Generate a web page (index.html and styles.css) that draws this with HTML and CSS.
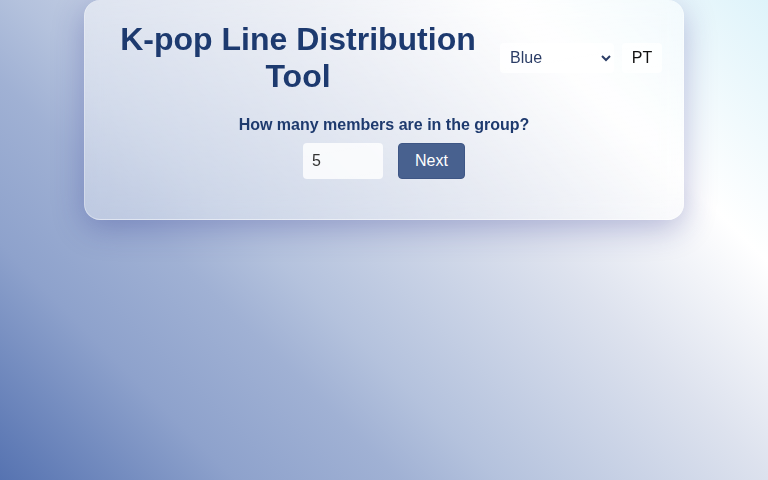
FILE: index.html
```html
<!DOCTYPE html>
<html lang="en">
<head>
<meta charset="utf-8">
<title>K-pop Line Distribution Tool</title>
<link rel="stylesheet" href="styles.css">
</head>
<body>
  <main class="card">
    <header class="header">
      <h1 class="title">K-pop Line Distribution Tool</h1>
      <div class="controls">
        <select class="theme-select">
          <option>Blue</option>
          <option>Pink</option>
          <option>Purple</option>
        </select>
        <button class="lang-btn" type="button">PT</button>
      </div>
    </header>
    <section class="step">
      <label class="question" for="members">How many members are in the group?</label>
      <div class="row">
        <input id="members" class="count-input" type="text" value="5">
        <button class="next-btn" type="button">Next</button>
      </div>
    </section>
  </main>
</body>
</html>
```

FILE: styles.css
```css
html, body {
  height: 100%;
}
body {
  margin: 0;
  font-family: "Liberation Sans", Arial, sans-serif;
  background: linear-gradient(45deg, #5673b1 0%, #8ea2cc 19%, #a0b1d4 32%, #b4c2dd 40%, #dde2ee 62%, #ffffff 79%, #def3fa 100%);
  background-attachment: fixed;
}
.card {
  box-sizing: border-box;
  width: 600px;
  margin: 0 auto;
  padding: 0 21px 40px 21px;
  border-radius: 16px;
  border: 1px solid rgba(255, 255, 255, 0.35);
  border-top: none;
  background: linear-gradient(170deg, rgba(255, 255, 255, 0.5), rgba(255, 255, 255, 0.28));
  backdrop-filter: blur(10px);
  box-shadow: 0 8px 32px rgba(31, 38, 135, 0.3);
}
.header {
  display: flex;
  align-items: center;
  gap: 9px;
  margin-left: -1px;
}
.title {
  flex: 1;
  margin: 21px 0 21px;
  font-size: 32px;
  font-weight: bold;
  line-height: 36.8px;
  text-align: center;
  color: #1d3a6f;
}
.controls {
  display: flex;
  align-items: center;
  gap: 8px;
}
.theme-select {
  width: 114px;
  height: 30px;
  padding: 0 4px 0 6px;
  border: none;
  border-radius: 4px;
  background-color: rgba(255, 255, 255, 0.75);
  font-family: "Liberation Sans", Arial, sans-serif;
  font-size: 16px;
  color: #2b3d66;
}
.lang-btn {
  width: 40px;
  height: 30px;
  padding: 0;
  border: none;
  border-radius: 4px;
  background: rgba(255, 255, 255, 0.75);
  font-family: "Liberation Sans", Arial, sans-serif;
  font-size: 16px;
  color: #111;
}
.step {
  text-align: center;
}
.question {
  display: block;
  font-size: 16px;
  font-weight: bold;
  line-height: 18.4px;
  color: #1e3a6e;
}
.row {
  display: flex;
  justify-content: center;
  gap: 15px;
  margin-top: 9px;
}
.count-input {
  box-sizing: border-box;
  width: 80px;
  height: 36px;
  padding: 0 9px;
  border: none;
  border-radius: 4px;
  background: rgba(255, 255, 255, 0.8);
  font-family: "Liberation Sans", Arial, sans-serif;
  font-size: 16px;
  color: #333;
}
.next-btn {
  box-sizing: border-box;
  width: 67px;
  height: 36px;
  padding: 0;
  border: 1px solid #3e5685;
  border-radius: 4px;
  background: #48618f;
  font-family: "Liberation Sans", Arial, sans-serif;
  font-size: 16px;
  color: #fff;
}
```
